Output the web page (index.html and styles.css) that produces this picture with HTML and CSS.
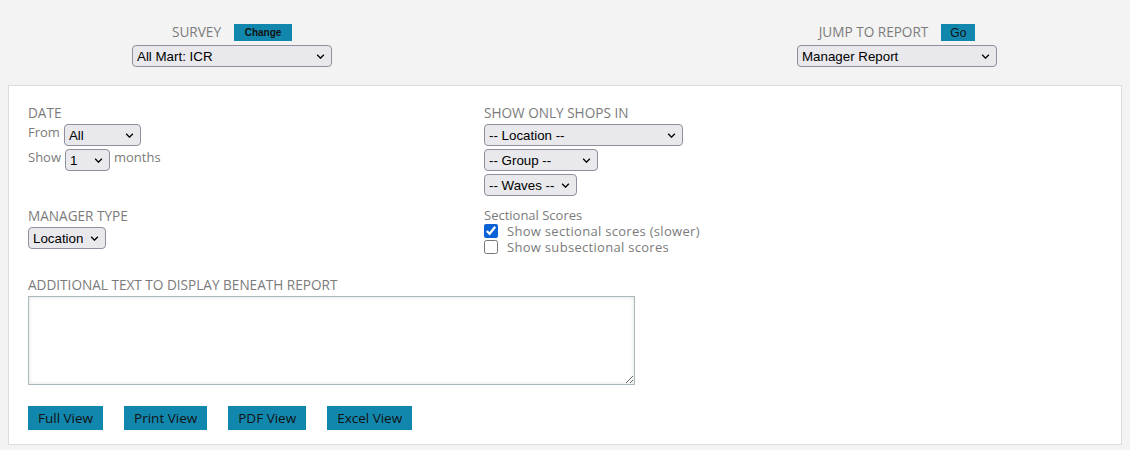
FILE: index.html
```html
<!DOCTYPE html>
<html lang="en">
<head>
    <meta charset="UTF-8">
    <title>Manager Report</title>
    <link rel="stylesheet" href="styles.css">
</head>
<body>

    <!-- Survey / report pickers -->
    <div class="top-bar">
        <div class="picker picker-survey">
            <div class="picker-head">
                <span class="label">Survey</span>
                <button class="small-btn">Change</button>
            </div>
            <span class="sel-wrap">
                <select class="sel sel-wide"><option>All Mart: ICR</option></select>
                <svg class="chev" viewBox="0 0 10 6"><path d="M1 1l4 4 4-4"/></svg>
            </span>
        </div>
        <div class="picker picker-report">
            <div class="picker-head">
                <span class="label">Jump to Report</span>
                <button class="small-btn go-btn">Go</button>
            </div>
            <span class="sel-wrap">
                <select class="sel sel-wide"><option>Manager Report</option></select>
                <svg class="chev" viewBox="0 0 10 6"><path d="M1 1l4 4 4-4"/></svg>
            </span>
        </div>
    </div>

    <!-- Report options -->
    <div class="panel">
        <div class="options">
            <div class="group">
                <div class="label">Date</div>
                <div class="line">
                    <span class="text">From</span>
                    <span class="sel-wrap">
                        <select class="sel sel-from"><option>All</option></select>
                        <svg class="chev" viewBox="0 0 10 6"><path d="M1 1l4 4 4-4"/></svg>
                    </span>
                </div>
                <div class="line">
                    <span class="text">Show</span>
                    <span class="sel-wrap">
                        <select class="sel sel-show"><option>1</option></select>
                        <svg class="chev" viewBox="0 0 10 6"><path d="M1 1l4 4 4-4"/></svg>
                    </span>
                    <span class="text">months</span>
                </div>
            </div>

            <div class="group">
                <div class="label">Show only shops in</div>
                <div class="line">
                    <span class="sel-wrap">
                        <select class="sel sel-location"><option>-- Location --</option></select>
                        <svg class="chev" viewBox="0 0 10 6"><path d="M1 1l4 4 4-4"/></svg>
                    </span>
                </div>
                <div class="line">
                    <span class="sel-wrap">
                        <select class="sel sel-group"><option>-- Group --</option></select>
                        <svg class="chev" viewBox="0 0 10 6"><path d="M1 1l4 4 4-4"/></svg>
                    </span>
                </div>
                <div class="line">
                    <span class="sel-wrap">
                        <select class="sel sel-waves"><option>-- Waves --</option></select>
                        <svg class="chev" viewBox="0 0 10 6"><path d="M1 1l4 4 4-4"/></svg>
                    </span>
                </div>
            </div>

            <div class="group">
                <div class="label">Manager Type</div>
                <div class="line">
                    <span class="sel-wrap">
                        <select class="sel sel-type"><option>Location</option></select>
                        <svg class="chev" viewBox="0 0 10 6"><path d="M1 1l4 4 4-4"/></svg>
                    </span>
                </div>
            </div>

            <div class="group">
                <div class="label plain">Sectional Scores</div>
                <div class="checks">
                    <label class="check"><input type="checkbox" checked> Show sectional scores (slower)</label>
                    <label class="check"><input type="checkbox"> Show subsectional scores</label>
                </div>
            </div>
        </div>

        <div class="group notes">
            <div class="label">Additional text to display beneath report</div>
            <textarea class="notes-box"></textarea>
        </div>

        <div class="actions">
            <button class="view-btn">Full View</button>
            <button class="view-btn">Print View</button>
            <button class="view-btn">PDF View</button>
            <button class="view-btn">Excel View</button>
        </div>
    </div>

</body>
</html>
```

FILE: styles.css
```css
/* General */
body {
    margin: 8px;
    background: #f3f3f3;
    font-family: 'Open Sans', 'Noto Sans', sans-serif;
    font-size: 13px;
    color: #7b7b7b;
}

.label {
    text-transform: uppercase;
    font-size: 13.6px;
    line-height: 17px;
    color: #7b7b7b;
}

.label.plain {
    text-transform: none;
    font-size: 13px;
}

/* Selects */
.sel-wrap {
    position: relative;
    display: inline-block;
    vertical-align: top;
}

.sel {
    display: block;
    appearance: none;
    -webkit-appearance: none;
    height: 22px;
    font-family: 'Liberation Sans', Arial, sans-serif;
    font-size: 13.33px;
    color: #000;
    background: #e9e9ed;
    border: 1px solid #8f8f9d;
    border-radius: 4px;
    padding: 0 4px;
}

.chev {
    position: absolute;
    right: 7px;
    top: 9px;
    width: 9px;
    height: 5px;
    fill: none;
    stroke: #000;
    stroke-width: 1.6;
    pointer-events: none;
}

.sel-wide { width: 200px; }
.sel-from { width: 77px; }
.sel-show { width: 45px; }
.sel-location { width: 199px; }
.sel-group { width: 114px; }
.sel-waves { width: 93px; }
.sel-type { width: 78px; }

/* Top pickers */
.top-bar {
    display: flex;
    padding: 16px 0 0 124px;
    height: 61px;
}

.picker {
    width: 200px;
    text-align: center;
}

.picker-report {
    margin-left: 465px;
}

.picker-head {
    display: flex;
    justify-content: center;
    align-items: center;
    gap: 13px;
    height: 17px;
    margin-bottom: 4px;
}

.picker-head .label {
    margin-top: -2px;
}

.small-btn {
    height: 17px;
    width: 58px;
    padding: 0;
    border: none;
    background: #1287ad;
    color: #111;
    font-family: 'Liberation Sans', Arial, sans-serif;
    font-size: 10px;
    font-weight: bold;
}

.go-btn {
    width: 34px;
    font-size: 12px;
    font-weight: normal;
}

/* Panel */
.panel {
    background: #fff;
    border: 1px solid #dcdcdc;
    padding: 18px 19px 14px;
}

.options {
    display: grid;
    grid-template-columns: 456px auto;
    row-gap: 11px;
}

.line {
    display: flex;
    align-items: flex-start;
    gap: 4px;
    margin-top: 3px;
}

.text {
    line-height: 17px;
}

.checks {
    margin-top: -1px;
}

.check {
    display: flex;
    align-items: center;
    gap: 9px;
    line-height: 16px;
    letter-spacing: 0.3px;
}

.check input {
    margin: 0;
    width: 14px;
    height: 14px;
    accent-color: #0b62d6;
}

/* Notes */
.notes {
    margin-top: 21px;
}

.notes-box {
    display: block;
    margin-top: 3px;
    width: 607px;
    height: 89px;
    box-sizing: border-box;
    border: 1px solid #aab8bc;
    box-shadow: inset 0 0 4px rgba(0, 0, 0, 0.12);
    resize: both;
}

/* Buttons */
.actions {
    display: flex;
    gap: 21px;
    margin-top: 21px;
}

.view-btn {
    height: 24px;
    padding: 0 10px;
    border: none;
    background: #1287ad;
    color: #111;
    font-family: 'Open Sans', 'Noto Sans', sans-serif;
    font-size: 13.5px;
}
```
